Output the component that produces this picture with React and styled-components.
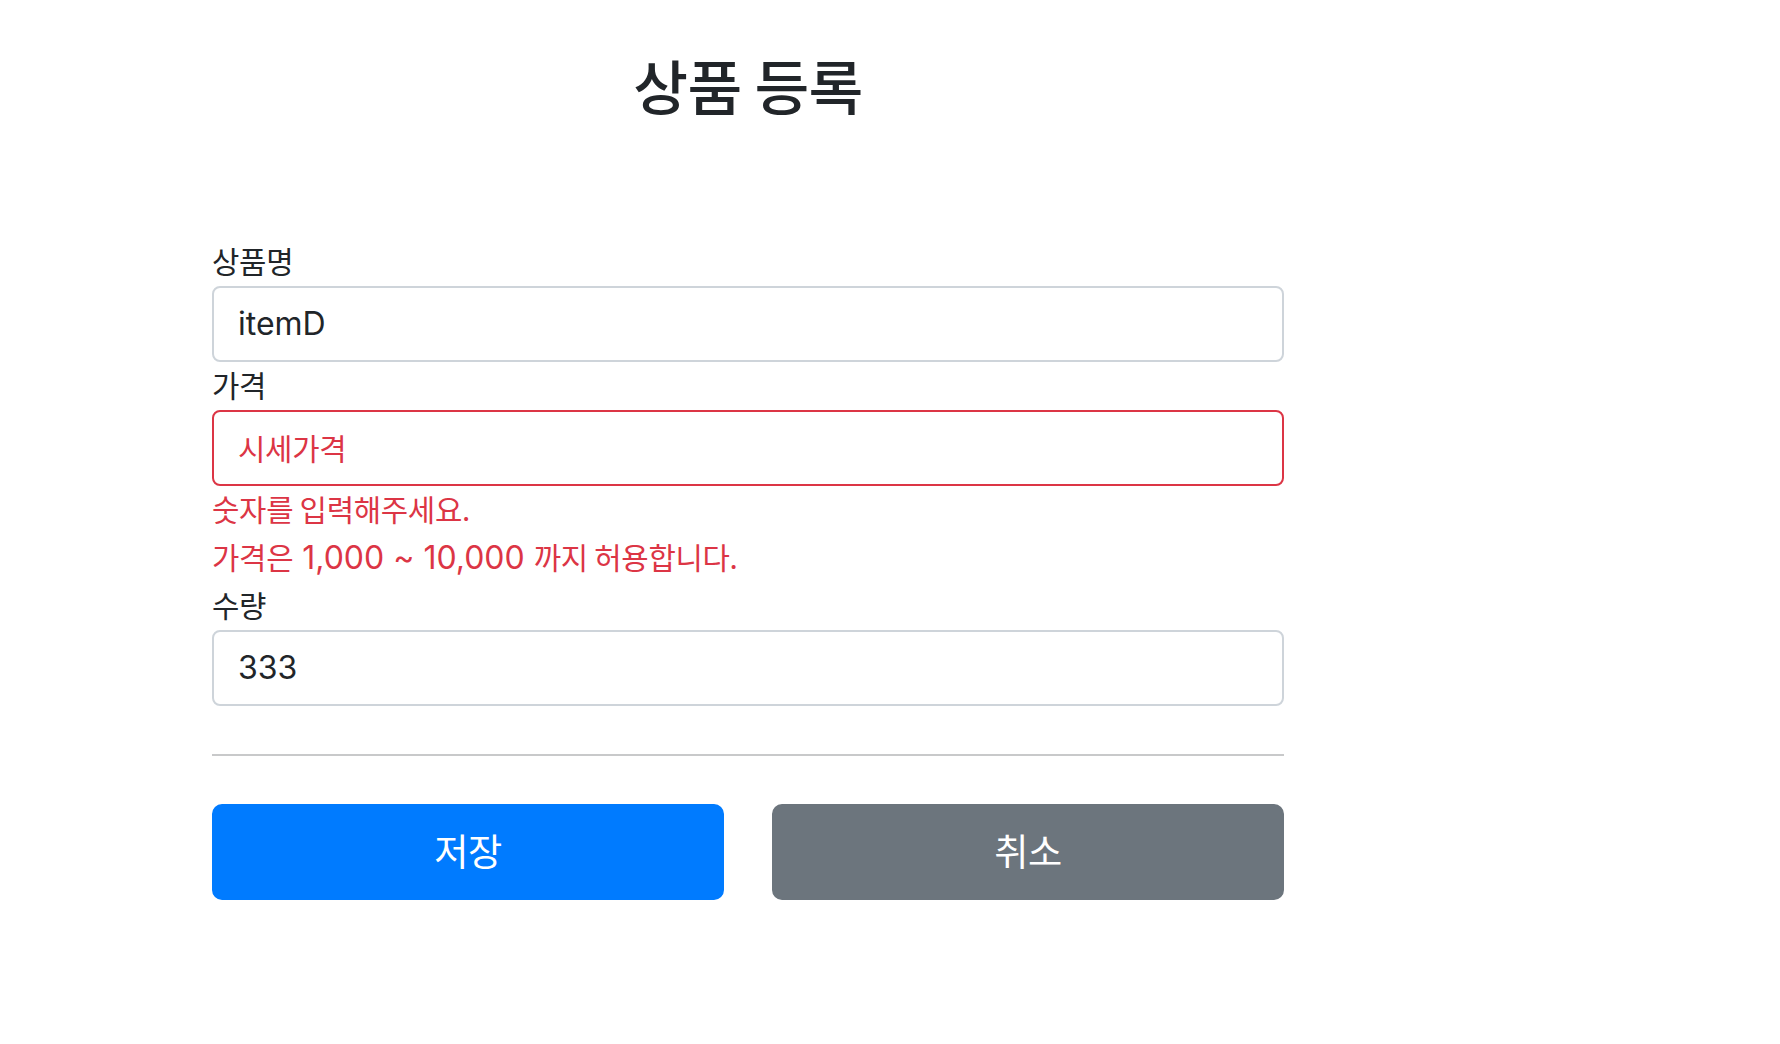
import React from "react";
import styled, { createGlobalStyle } from "styled-components";

const Global = createGlobalStyle`
  html, body { margin: 0; padding: 0; background: #fff; }
  body {
    font-family: Inter, "Noto Sans CJK KR", sans-serif;
    color: #212529;
    font-size: 32px;
    line-height: 1.5;
  }
  * { box-sizing: border-box; }
`;

const Container = styled.div`
  width: 1072px;
  margin-left: 212px;
`;

const Header = styled.div`
  padding: 49px 0 96px;
  text-align: center;
`;

const Title = styled.h2`
  margin: 0 0 16px;
  font-size: 64px;
  font-weight: 500;
  line-height: 76.8px;
  height: 76.8px;
`;

const Ko = styled.span`
  font-family: "Noto Sans CJK KR", sans-serif;
  font-size: 0.93em;
  letter-spacing: -0.01em;
  line-height: 1;
`;

const Field = styled.div`
  display: flex;
  flex-direction: column;
`;

const Label = styled.label`
  display: block;
  font-size: 32px;
  line-height: 48px;
  height: 48px;
`;

const InputText = styled.div`
  display: flex;
  align-items: center;
  width: 100%;
  height: 76px;
  padding: 12px 24px;
  font-size: 32px;
  line-height: 48px;
  color: ${(p) => (p.$invalid ? "#dc3545" : "#212529")};
  background: #fff;
  border: 2px solid ${(p) => (p.$invalid ? "#dc3545" : "#ced4da")};
  border-radius: 8px;
`;

const FieldError = styled.div`
  color: #dc3545;
  font-size: 32px;
  line-height: 48px;
  height: 48px;
`;

const Divider = styled.hr`
  margin: 48px 0;
  border: 0;
  border-top: 2px solid #c8c9ca;
  height: 0;
`;

const ButtonRow = styled.div`
  display: grid;
  grid-template-columns: 1fr 1fr;
  gap: 48px;
`;

const Button = styled.button`
  width: 100%;
  height: 96px;
  border: 2px solid ${(p) => (p.$variant === "primary" ? "#007bff" : "#6c757d")};
  background: ${(p) => (p.$variant === "primary" ? "#007bff" : "#6c757d")};
  color: #fff;
  border-radius: 10px;
  font-family: Inter, "Noto Sans CJK KR", sans-serif;
  font-size: 40px;
  line-height: 60px;
  padding: 16px 32px;
  cursor: pointer;
`;

export default function App() {
  return (
    <>
      <Global />
      <Container>
        <Header>
          <Title>
            <Ko>상품 등록</Ko>
          </Title>
        </Header>
        <form onSubmit={(e) => e.preventDefault()}>
          <Field>
            <Label htmlFor="itemName">
              <Ko>상품명</Ko>
            </Label>
            <InputText id="itemName">itemD</InputText>
          </Field>
          <Field>
            <Label htmlFor="price">
              <Ko>가격</Ko>
            </Label>
            <InputText id="price" $invalid>
              <Ko>시세가격</Ko>
            </InputText>
            <FieldError>
              <Ko>숫자를 입력해주세요.</Ko>
            </FieldError>
            <FieldError>
              <Ko>가격은</Ko> 1,000 ~ 10,000 <Ko>까지 허용합니다.</Ko>
            </FieldError>
          </Field>
          <Field>
            <Label htmlFor="quantity">
              <Ko>수량</Ko>
            </Label>
            <InputText id="quantity">333</InputText>
          </Field>
          <Divider />
          <ButtonRow>
            <Button type="submit" $variant="primary">
              <Ko>저장</Ko>
            </Button>
            <Button type="button" $variant="secondary">
              <Ko>취소</Ko>
            </Button>
          </ButtonRow>
        </form>
      </Container>
    </>
  );
}
